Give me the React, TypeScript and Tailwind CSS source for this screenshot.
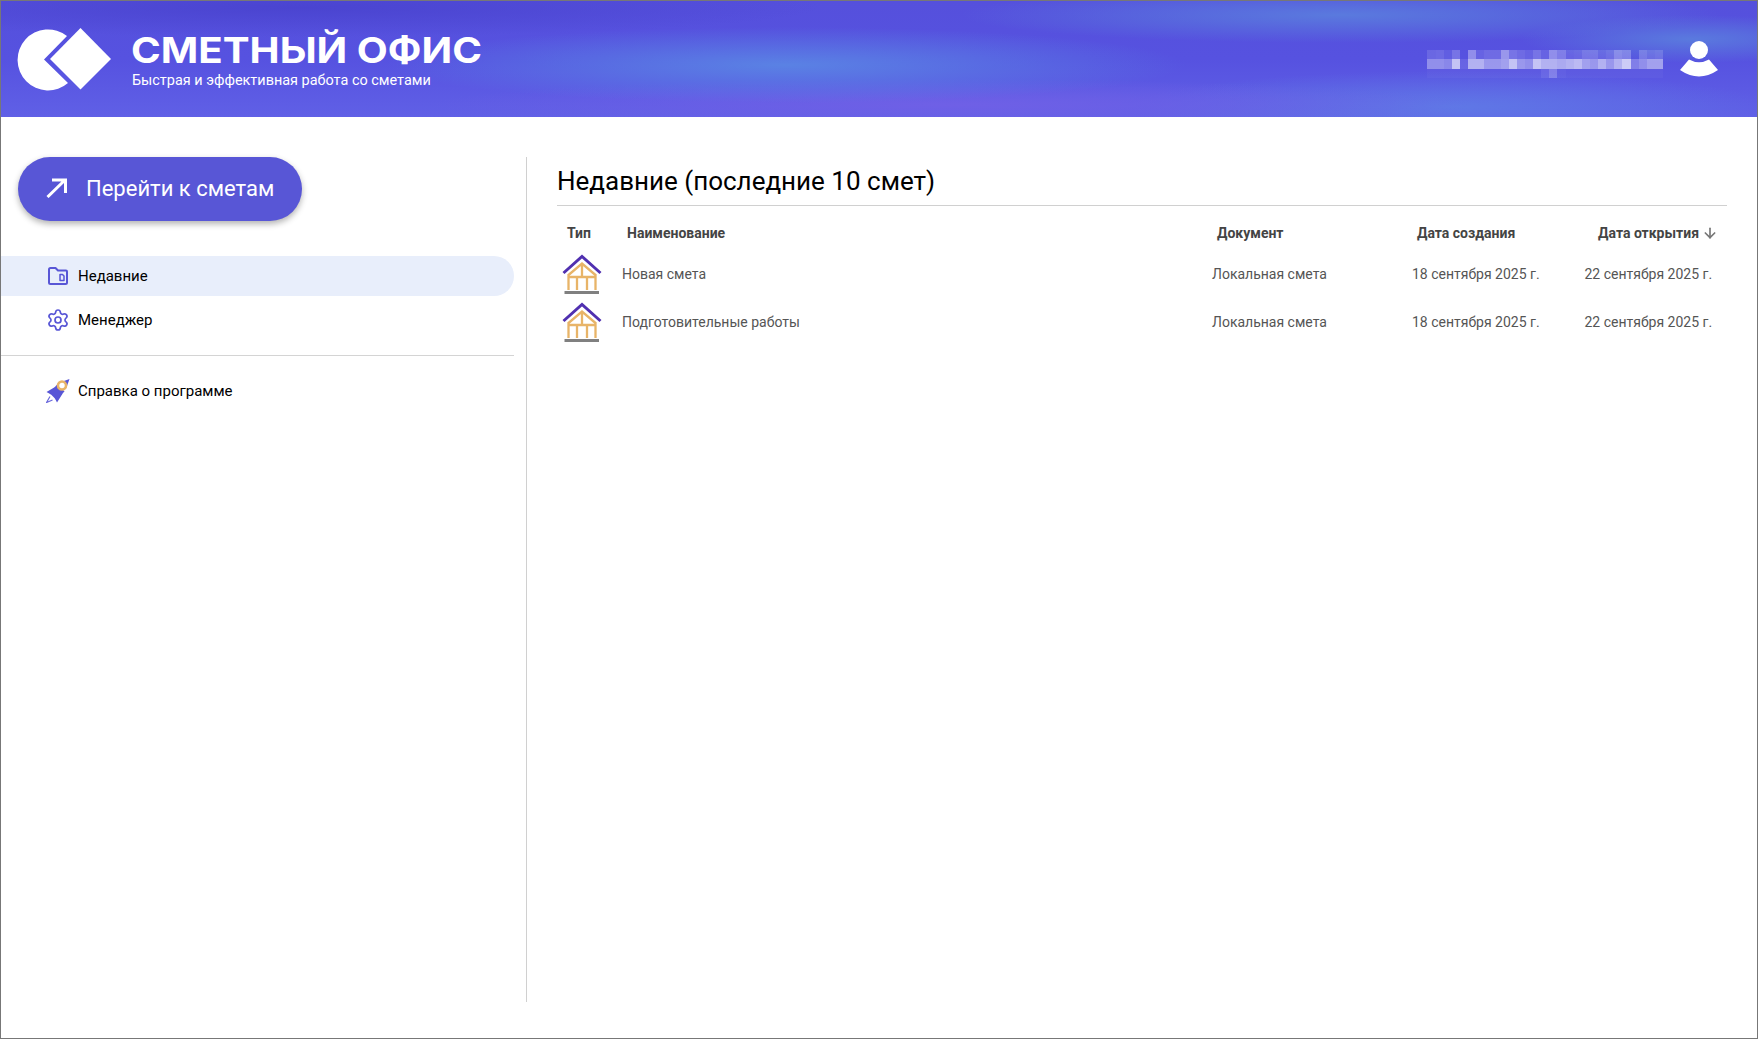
import { ArrowDown, Settings } from "lucide-react"

const headerBg =
  "bg-[radial-gradient(ellipse_400px_38px_at_785px_64px,#5a82e4_0%,#5a82e400_100%),radial-gradient(ellipse_380px_28px_at_1340px_14px,#5a7ade_0%,#5a7ade00_100%),radial-gradient(ellipse_170px_24px_at_1690px_38px,#5a7ade_0%,#5a7ade00_100%),radial-gradient(ellipse_520px_26px_at_950px_104px,#6f60e6_0%,#6f60e600_100%),radial-gradient(ellipse_320px_36px_at_1450px_106px,#5f78e6_0%,#5f78e600_100%),radial-gradient(ellipse_520px_30px_at_300px_6px,#4a44d0_0%,#4a44d000_100%),linear-gradient(180deg,#5550dc_0%,#5652e0_50%,#6060e6_100%)]"

const mosaicTop = [12, 14, 7, 20, 0, 35, 10, 15, 15, 40, 20, 15, 10, 20, 10, 35, 25, 10, 12, 20, 20, 10, 15, 30, 25, 0, 20, 12, 15]
const mosaicMid = [35, 35, 30, 65, 10, 55, 55, 40, 40, 45, 65, 40, 35, 65, 55, 55, 50, 55, 60, 45, 40, 55, 40, 55, 70, 25, 35, 45, 45]
const mosaicLow = [3, 3, 3, 3, 3, 3, 3, 3, 3, 3, 3, 3, 3, 3, 10, 25, 6, 3, 3, 3, 3, 3, 3, 3, 3, 3, 3, 3, 3]

function Mosaic() {
  return (
    <div className="flex flex-col">
      {[mosaicTop, mosaicMid, mosaicLow].map((row, i) => (
        <div key={i} className="flex h-[9.4px]">
          {row.map((v, j) => (
            <div key={j} className="h-full w-[8.14px]" style={{ backgroundColor: `rgba(255,255,255,${v / 100})` }} />
          ))}
        </div>
      ))}
    </div>
  )
}

function Logo() {
  return (
    <svg width="95" height="63" viewBox="17 27 95 63" className="shrink-0">
      <path d="M44 58.5 L67 35 A30.5 30.5 0 1 0 68 82 Z" fill="#fff" />
      <path d="M50 58 L80.500 27 L111 58 L80.500 88.500 Z" fill="#fff" />
    </svg>
  )
}

function UserIcon() {
  return (
    <svg width="40" height="38" viewBox="1679 40 40 38" className="shrink-0">
      <circle cx="1699" cy="50" r="9" fill="#fff" />
      <path d="M1680 70 L1689 59.500 Q1699 65 1709 59.500 L1718 70 Q1699 83 1680 70 Z" fill="#fff" />
    </svg>
  )
}

function GoIcon() {
  return (
    <svg width="22" height="20" viewBox="0 0 22 20" fill="none" stroke="#fff" strokeWidth="3" className="shrink-0">
      <path d="M1.500 19 L19 2 M6 2 H19.500 V15" />
    </svg>
  )
}

function FolderIcon() {
  return (
    <svg width="20" height="18" viewBox="0 0 20 18" fill="none" stroke="#5856d6" strokeWidth="2" strokeLinejoin="round" className="shrink-0">
      <path d="M1 2.500 Q1 1 2.500 1 H7.500 L10 3.500 H18 Q19 3.500 19 4.500 V15.500 Q19 17 17.500 17 H2.500 Q1 17 1 15.500 Z" />
      <path d="M12 7.500 H14.500 L16 9 V13.500 H12 Z" strokeWidth="1.500" />
    </svg>
  )
}

function RocketIcon() {
  return (
    <svg width="24" height="24" viewBox="0 0 24 24" className="shrink-0">
      <path d="M23.500 0 L16.500 2.500 L21 7 Z" fill="#5856d6" />
      <path d="M9 8 L0.500 13 L5 15.500 Z M17 14 L11 23.500 L8.500 18.500 Z" fill="#5856d6" />
      <path d="M11.500 5 L18.500 12.500 L10 20.500 L3.500 14 Z" fill="#5856d6" />
      <circle cx="16" cy="6.500" r="4" fill="#fff" stroke="#e8b468" strokeWidth="2.600" />
      <path d="M4 17.500 L0.500 23.500 L6.500 21" fill="none" stroke="#6a68dc" strokeWidth="1.200" />
    </svg>
  )
}

function HouseIcon() {
  return (
    <svg width="44" height="40" viewBox="560 254 44 40" fill="none" className="shrink-0">
      <path d="M568.500 275 L582 263.500 L595.500 275 M582 263.500 V277 M568.500 274 V290 M577 277 V290 M587 277 V290 M595.500 274 V290 M568 277 H596" stroke="#e8b468" strokeWidth="2.300" />
      <path d="M563.500 273 L582 256.500 L600.500 273" stroke="#5030b0" strokeWidth="3" />
      <path d="M564.500 292.500 H599" stroke="#808080" strokeWidth="2.800" />
    </svg>
  )
}

const rows = ["Новая смета", "Подготовительные работы"]

export default function App() {
  return (
    <div className="flex h-screen w-screen flex-col overflow-hidden border border-[#777] bg-white font-['Roboto',sans-serif]">
      <header className={`flex h-[116px] shrink-0 items-center justify-between pl-[16px] pr-[38px] ${headerBg}`}>
        <div className="flex items-center">
          <Logo />
          <div className="mt-[1px] ml-[19px] text-white">
            <div className="origin-left scale-x-[1.118] pt-[1px] font-['Inter',sans-serif] text-[36px] leading-[40px] font-bold">СМЕТНЫЙ ОФИС</div>
            <div className="mt-[2px] pl-[1px] text-[14.45px] leading-[18px] font-normal">Быстрая и эффективная работа со сметами</div>
          </div>
        </div>
        <div className="flex items-center gap-[16px]">
          <div className="mt-[10px]">
            <Mosaic />
          </div>
          <UserIcon />
        </div>
      </header>

      <div className="flex flex-1 pt-[40px]">
        <aside className="flex h-[845px] w-[526px] shrink-0 flex-col border-r border-[#d0d0d0] pr-[12px]">
          <button className="ml-[17px] flex h-[64px] w-[284px] items-center rounded-full bg-[#5856d6] pb-[2px] pl-[28px] text-white shadow-[0_3px_6px_rgba(0,0,0,0.3)]">
            <GoIcon />
            <span className="ml-[18px] text-[22px]">Перейти к сметам</span>
          </button>

          <div className="mt-[35px] flex h-[40px] items-center rounded-r-full bg-[#e8eefb] pl-[47px]">
            <FolderIcon />
            <span className="ml-[10px] text-[15px] text-black">Недавние</span>
          </div>
          <div className="mt-[4px] flex h-[40px] items-center pl-[45px]">
            <Settings size={24} strokeWidth={1.7} color="#5856d6" />
            <span className="ml-[8px] text-[15px] text-black">Менеджер</span>
          </div>
          <div className="mt-[15px] border-t border-[#d4d4d4]" />
          <div className="mt-[15px] flex h-[40px] items-center pl-[45px]">
            <RocketIcon />
            <span className="ml-[8px] text-[15px] text-black">Справка о программе</span>
          </div>
        </aside>

        <main className="flex-1 pl-[30px] pr-[30px]">
          <h1 className="flex h-[49px] items-center border-b border-[#d0d0d0] text-[26px] font-normal text-black">
            Недавние (последние 10 смет)
          </h1>
          <div className="mt-[15px] mb-[5px] grid h-[24px] grid-cols-[60px_590px_200px_172px_1fr] items-center text-[14px] font-bold text-[#444]">
            <div className="pl-[10px]">Тип</div>
            <div className="pl-[10px]">Наименование</div>
            <div className="pl-[10px]">Документ</div>
            <div className="pl-[10px]">Дата создания</div>
            <div className="flex items-center justify-end gap-[3px] pr-[9px]">
              Дата открытия
              <ArrowDown size={16} strokeWidth={2.5} color="#777" />
            </div>
          </div>
          {rows.map((name) => (
            <div key={name} className="grid h-[48px] grid-cols-[60px_590px_200px_172px_1fr] items-center text-[14px] text-[#555]">
              <div className="pl-[3px]">
                <HouseIcon />
              </div>
              <div className="pl-[5px]">{name}</div>
              <div className="pl-[5px]">Локальная смета</div>
              <div className="pl-[5px]">18 сентября 2025 г.</div>
              <div className="pl-[5.5px]">22 сентября 2025 г.</div>
            </div>
          ))}
        </main>
      </div>
    </div>
  )
}
